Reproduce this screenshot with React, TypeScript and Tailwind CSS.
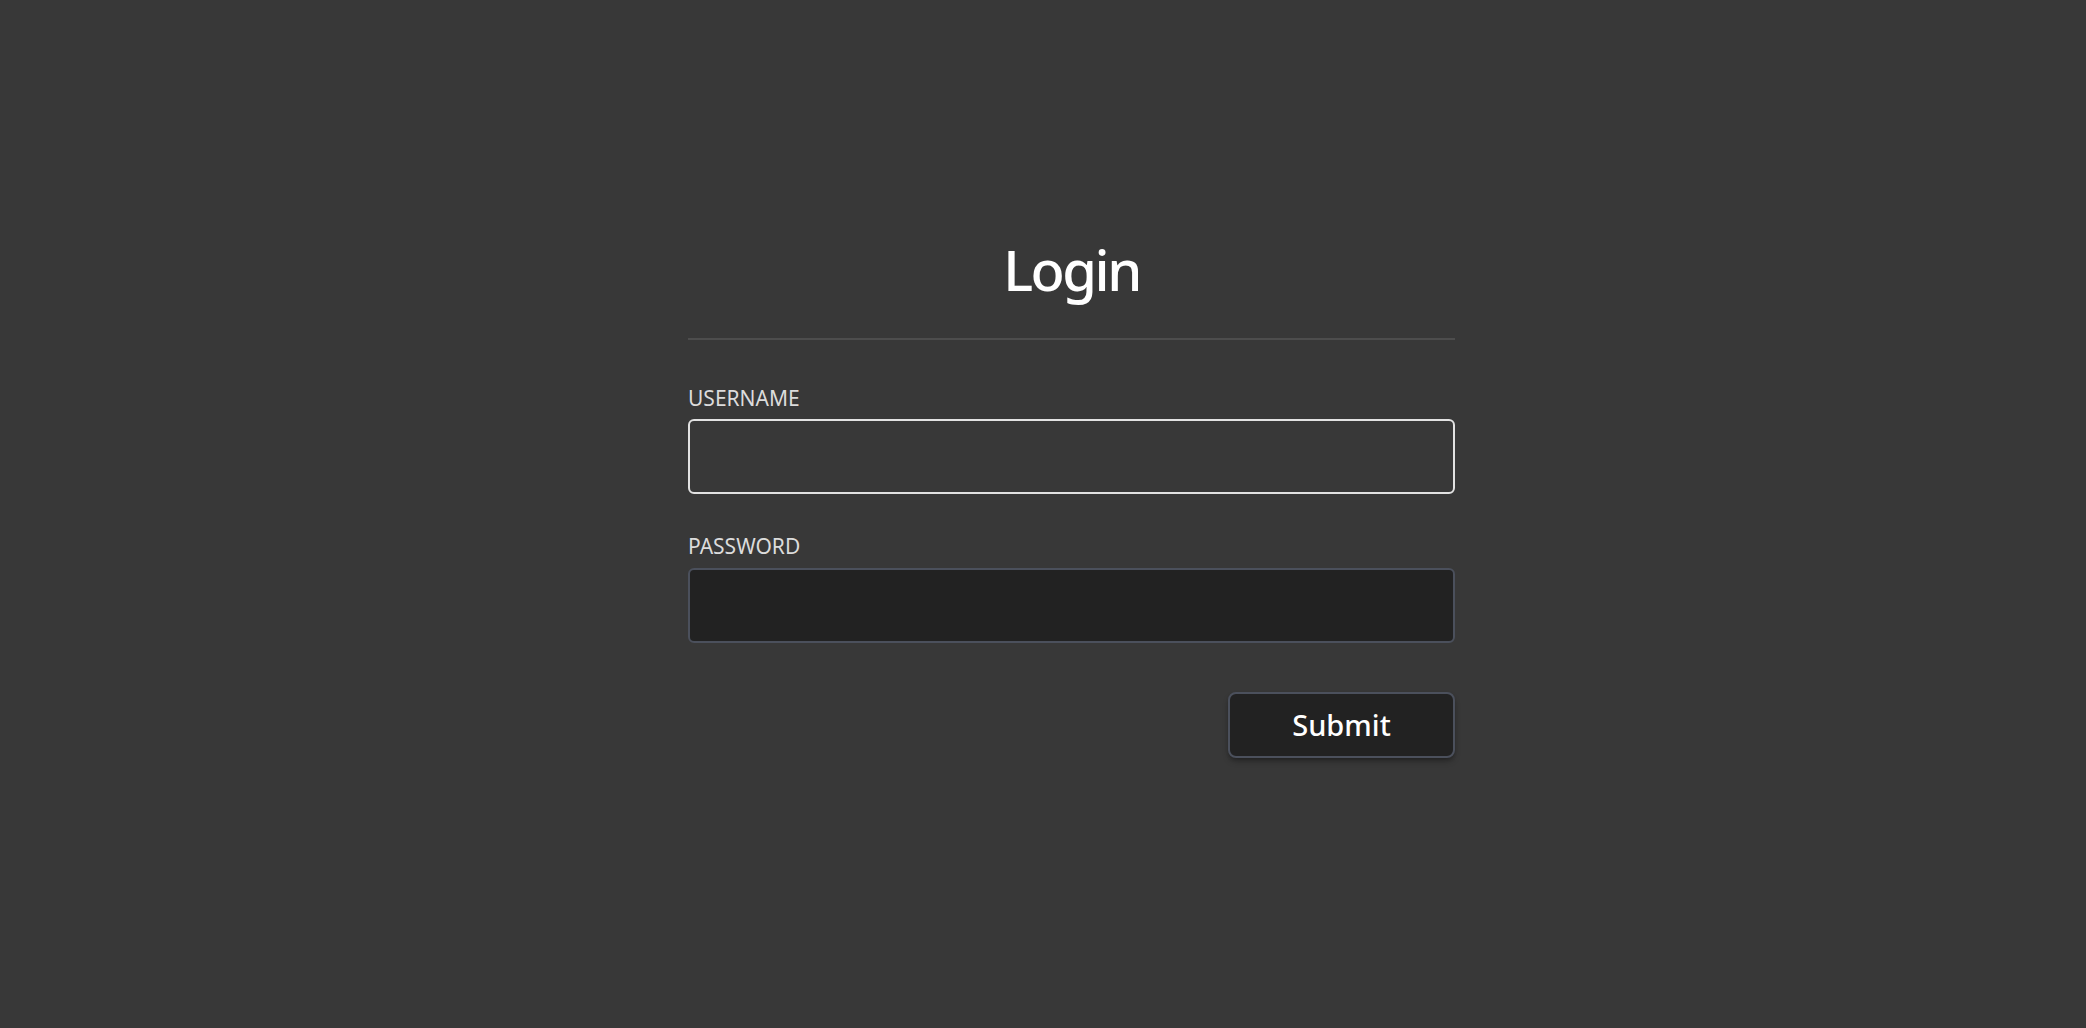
export default function App() {
  return (
    <div className="min-h-screen bg-[#383838] font-['Noto_Sans',sans-serif] flex justify-center pl-[57px]">
      <form className="w-[767px] pt-[241px] flex flex-col" onSubmit={(e) => e.preventDefault()}>
        <h1 className="text-center text-white text-[56px] font-medium leading-none tracking-[-2.5px] h-[56px]">Login</h1>
        <div className="mt-[41px] border-t-2 border-[#4d4d4d]" />

        <label className="mt-[48px] text-[21px] leading-none text-[#dcdcdc]">USERNAME</label>
        <input
          type="text"
          className="mt-[10px] h-[75px] w-full rounded-md border-2 border-[#e2e2e2] bg-[#383838] px-4 text-white outline-none"
        />

        <label className="mt-[42px] text-[21px] leading-none text-[#dcdcdc]">PASSWORD</label>
        <input
          type="password"
          className="mt-[11px] h-[75px] w-full rounded-md border-2 border-[#4b505c] bg-[#222222] px-4 text-white outline-none"
        />

        <div className="mt-[49px] flex justify-end">
          <button
            type="submit"
            className="h-[66px] w-[227px] rounded-lg border-2 border-[#4b505c] bg-[#222222] text-[29px] font-medium text-white shadow-md shadow-black/30"
          >
            Submit
          </button>
        </div>
      </form>
    </div>
  );
}
